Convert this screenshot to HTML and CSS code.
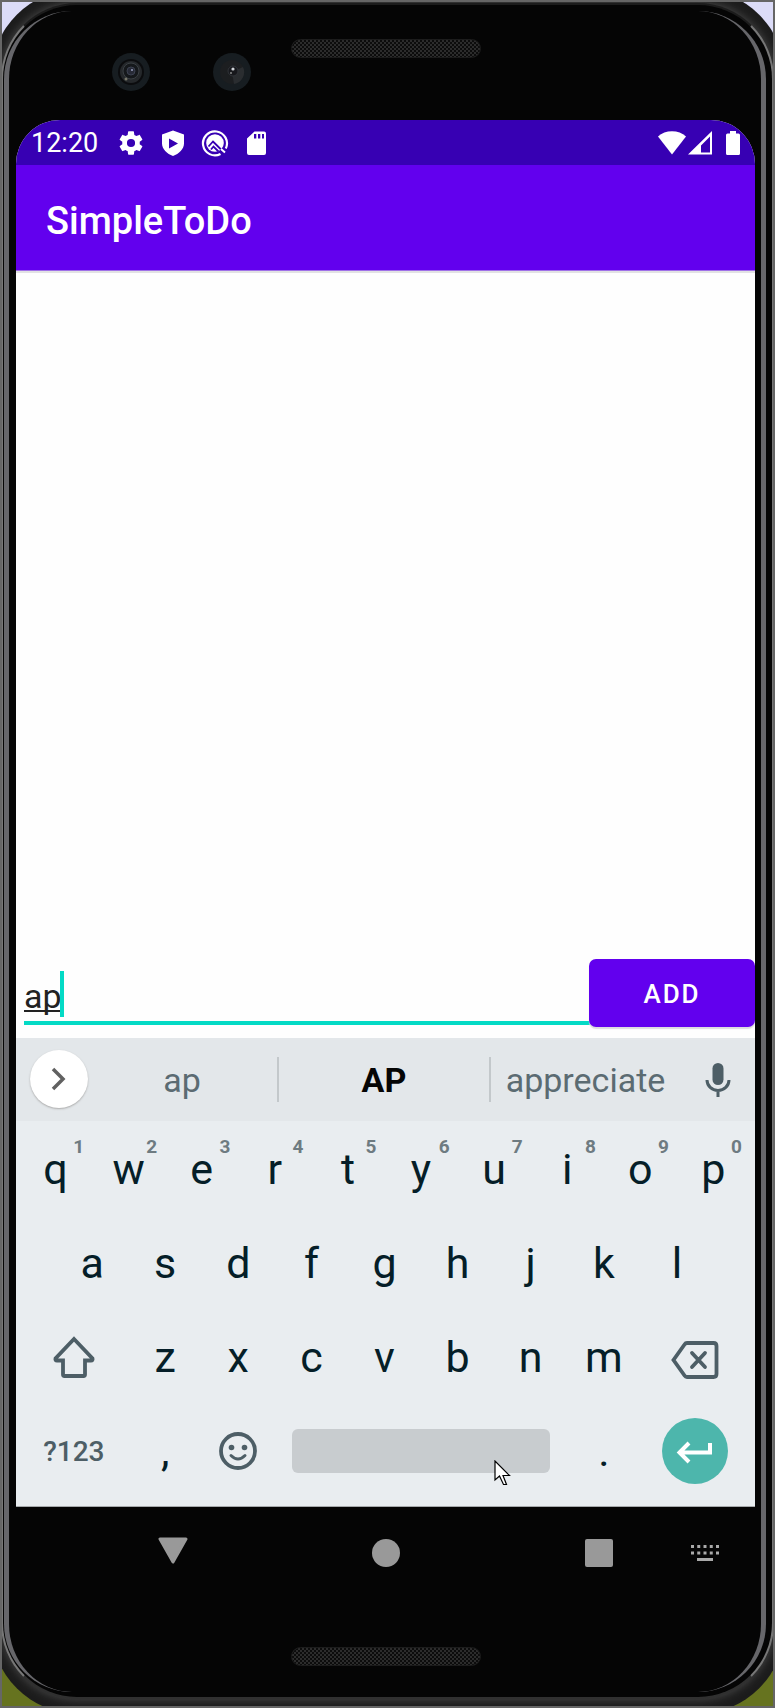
FILE: index.html
```html
<!DOCTYPE html>
<html lang="en">
<head>
<meta charset="utf-8">
<meta name="viewport" content="width=device-width, initial-scale=1">
<title>SimpleToDo</title>
<link rel="stylesheet" href="styles.css">
</head>
<body>
<div class="window">
  <div class="phone">
    <span class="shell"></span>
    <span class="rim"></span>
    <span class="bevel"></span>

    <div class="bezel bezel-top">
      <div class="cameras">
        <svg class="camera" viewBox="0 0 38 38" aria-hidden="true"><circle cx="19" cy="19" r="19" fill="#171d21"/><circle cx="19" cy="19" r="13" fill="#0b0c0e"/><circle cx="19" cy="19" r="11" fill="#25282b"/><circle cx="19" cy="18" r="8" fill="#15181b" stroke="#3b4044"/><circle cx="19" cy="18" r="4" fill="#272a36" stroke="#3c4150"/><circle cx="20" cy="17" r="1" fill="#9aa0c0"/><circle cx="14" cy="26" r="1.5" fill="#77776a"/></svg>
        <svg class="camera" viewBox="0 0 38 38" aria-hidden="true"><circle cx="19" cy="19" r="19" fill="#171d21"/><circle cx="19" cy="19" r="12" fill="#1c1e20"/><path d="M19 19 30 14a12 12 0 0 1-9 17z" fill="#2a2d30"/><circle cx="20" cy="18" r="5" fill="#17181c" stroke="#303338"/><circle cx="20" cy="16" r="1.6" fill="#d0d4d8"/><circle cx="18" cy="20" r="1" fill="#888"/></svg>
      </div>
      <div class="speaker"></div>
    </div>

    <div class="screen">
      <div class="status">
        <span class="clock">12:20</span>
        <div class="status-icons">
          <svg class="icon28" viewBox="0 0 24 24" aria-hidden="true"><path fill="#fff" d="M19.43 12.98c.04-.32.07-.64.07-.98s-.03-.66-.07-.98l2.11-1.65c.19-.15.24-.42.12-.64l-2-3.46c-.12-.22-.39-.3-.61-.22l-2.49 1c-.52-.4-1.08-.73-1.69-.98l-.38-2.65C14.46 2.18 14.25 2 14 2h-4c-.25 0-.46.18-.49.42l-.38 2.65c-.61.25-1.17.59-1.69.98l-2.49-1c-.23-.09-.49 0-.61.22l-2 3.46c-.13.22-.07.49.12.64l2.11 1.65c-.04.32-.07.65-.07.98s.03.66.07.98l-2.11 1.65c-.19.15-.24.42-.12.64l2 3.46c.12.22.39.3.61.22l2.49-1c.52.4 1.08.73 1.69.98l.38 2.65c.03.24.24.42.49.42h4c.25 0 .46-.18.49-.42l.38-2.65c.61-.25 1.17-.59 1.69-.98l2.49 1c.23.09.49 0 .61-.22l2-3.46c.12-.22.07-.49-.12-.64l-2.11-1.65zM12 15.5a3.5 3.5 0 1 1 0-7 3.5 3.5 0 0 1 0 7z"/></svg>
          <svg class="icon28" viewBox="0 0 28 28" aria-hidden="true"><path fill="#fff" fill-rule="evenodd" d="M14 1.500 25 5.500v9c0 5.500-5 10.500-11 12.500C8 25 3 20 3 14.500v-9zM10 9.500v10l9-5z"/></svg>
          <svg class="icon28" viewBox="0 0 28 28" aria-hidden="true"><path fill="none" stroke="#fff" stroke-width="2.200" d="M19.500 25A12 12 0 1 1 24.800 19.500"/><circle cx="14" cy="14" r="8.800" fill="#fff"/><path fill="none" stroke="#3700b3" stroke-width="1.800" d="M7.500 17.500 12 12.500 14 14.500 21.500 22M10 20.500 12.500 17.500 17.500 22.500"/><path fill="none" stroke="#fff" stroke-width="2" d="m20 20 4 3.500"/></svg>
          <svg class="icon28" viewBox="0 0 28 28" aria-hidden="true"><path fill="#fff" fill-rule="evenodd" d="M11.500 2.500H21a2 2 0 0 1 2 2v19.500a2 2 0 0 1-2 2H6a2 2 0 0 1-2-2V9.500zM11 5v4.500h2.300V5zm4 0v4.500h2.300V5zm4 0v4.500h2V5z"/></svg>
        </div>
        <div class="system-icons">
          <svg class="icon28" viewBox="0 0 28 28" aria-hidden="true"><path fill="#fff" d="M0 7.500C7 .500 21 .500 28 7.500L14 25.500z"/></svg>
          <svg class="icon28" viewBox="0 0 28 28" aria-hidden="true"><path fill="#fff" fill-rule="evenodd" d="M26 2v23.500H2zM24 7.500 15 16.500v7h9z"/></svg>
          <svg class="icon28 battery" viewBox="0 0 28 28" aria-hidden="true"><path fill="#fff" d="M11 2h6v2.500h2.500a1.500 1.500 0 0 1 1.500 1.500v18.500a1.500 1.500 0 0 1-1.500 1.500h-11A1.500 1.500 0 0 1 7 24.500V6a1.500 1.500 0 0 1 1.500-1.500H11z"/></svg>
        </div>
      </div>

      <header class="appbar"><h1 class="title">SimpleToDo</h1></header>
      <main class="list"></main>

      <form class="entry">
        <div class="field">
          <input class="entry-input" type="text" value="ap" aria-label="New item">
          <span class="caret"></span>
        </div>
        <button class="add" type="button">ADD</button>
      </form>

      <div class="suggestions">
        <button class="expand" type="button" aria-label="Expand toolbar"><svg width="28" height="28" viewBox="0 0 28 28" aria-hidden="true"><path d="m8 4 10 10L8 24" fill="none" stroke="#616161" stroke-width="3.500"/></svg></button>
        <button class="suggestion" type="button">ap</button>
        <button class="suggestion best" type="button">AP</button>
        <button class="suggestion" type="button">appreciate</button>
        <button class="mic" type="button" aria-label="Voice input"><svg width="26" height="34" viewBox="0 0 26 34" aria-hidden="true"><rect x="7.500" y="0" width="11" height="22" rx="5.500" fill="#4d5e66"/><path d="M2 17a11 10.500 0 0 0 22 0M13 27v7" fill="none" stroke="#4d5e66" stroke-width="3"/></svg></button>
      </div>

      <div class="keyboard">
        <div class="keys">
          <button class="key" type="button">q<span class="hint">1</span></button>
          <button class="key" type="button">w<span class="hint">2</span></button>
          <button class="key" type="button">e<span class="hint">3</span></button>
          <button class="key" type="button">r<span class="hint">4</span></button>
          <button class="key" type="button">t<span class="hint">5</span></button>
          <button class="key" type="button">y<span class="hint">6</span></button>
          <button class="key" type="button">u<span class="hint">7</span></button>
          <button class="key" type="button">i<span class="hint">8</span></button>
          <button class="key" type="button">o<span class="hint">9</span></button>
          <button class="key" type="button">p<span class="hint">0</span></button>
        </div>
        <div class="keys">
          <button class="key key-inset" type="button">a</button>
          <button class="key" type="button">s</button>
          <button class="key" type="button">d</button>
          <button class="key" type="button">f</button>
          <button class="key" type="button">g</button>
          <button class="key" type="button">h</button>
          <button class="key" type="button">j</button>
          <button class="key" type="button">k</button>
          <button class="key" type="button">l</button>
        </div>
        <div class="keys">
          <button class="key key-wide" type="button" aria-label="Shift"><svg width="44" height="44" viewBox="0 0 44 44" aria-hidden="true"><path d="M22 4 40.500 23.500q.500 2-1.500 2h-6v14q0 1.500-1.500 1.500h-19q-1.500 0-1.500-1.500v-14H5q-2 0-1.500-2z" fill="none" stroke="#4d5e66" stroke-width="3.800"/></svg></button>
          <button class="key" type="button">z</button>
          <button class="key" type="button">x</button>
          <button class="key" type="button">c</button>
          <button class="key" type="button">v</button>
          <button class="key" type="button">b</button>
          <button class="key" type="button">n</button>
          <button class="key" type="button">m</button>
          <button class="key key-wide" type="button" aria-label="Backspace"><svg width="48" height="44" viewBox="0 0 48 44" aria-hidden="true"><g fill="none" stroke="#4d5e66" stroke-width="3.800"><path d="M16 8h26.500q3 0 3 3v28q0 3-3 3H16q-1.500 0-2.500-1.500L2.500 25 13.500 9.500Q14.500 8 16 8z"/><path stroke-linecap="round" d="m21 18 13 14M34 18 21 32"/></g></svg></button>
        </div>
        <div class="keys">
          <button class="key key-wide key-symbols" type="button">?123</button>
          <button class="key" type="button">,</button>
          <button class="key" type="button" aria-label="Emoji"><svg width="38" height="38" viewBox="0 0 38 38" aria-hidden="true"><circle cx="19" cy="19" r="17" fill="none" stroke="#4d5e66" stroke-width="3.800"/><circle cx="12.500" cy="15.500" r="2.800" fill="#4d5e66"/><circle cx="25.500" cy="15.500" r="2.800" fill="#4d5e66"/><path d="M12 23.500q7 7 14 0" fill="none" stroke="#4d5e66" stroke-width="3" stroke-linecap="round"/></svg></button>
          <button class="space" type="button" aria-label="Space"><svg class="pointer" width="17" height="26" viewBox="0 0 17 26" aria-hidden="true"><path d="M1 1v19l4.500-4 4 8.500h3L9 15.500h6.500z" fill="#fff" stroke="#000" stroke-width="1.200"/></svg></button>
          <button class="key" type="button">.</button>
          <button class="key key-wide" type="button" aria-label="Enter"><svg width="66" height="66" viewBox="0 0 66 66" aria-hidden="true"><circle cx="33" cy="33" r="33" fill="#4db6ac"/><path d="M48 25v9.500H17M27 25 17.500 34.500 27 44" fill="none" stroke="#fff" stroke-width="4"/></svg></button>
        </div>
      </div>

      <nav class="nav">
        <button class="nav-button nav-back" type="button" aria-label="Back"><svg width="30" height="32" viewBox="0 0 30 32" aria-hidden="true"><path d="M2 2h26L15 25z" fill="#999" stroke="#999" stroke-width="3" stroke-linejoin="round"/></svg></button>
        <button class="nav-button" type="button" aria-label="Home"><svg width="28" height="28" viewBox="0 0 28 28" aria-hidden="true"><circle cx="14" cy="14" r="14" fill="#999"/></svg></button>
        <button class="nav-button" type="button" aria-label="Recent apps"><svg width="28" height="28" viewBox="0 0 28 28" aria-hidden="true"><rect width="28" height="28" rx="2" fill="#999"/></svg></button>
        <button class="nav-button nav-keyboard" type="button" aria-label="Switch keyboard"><svg width="28" height="16" viewBox="0 0 28 16" aria-hidden="true"><path d="M0 1.500h28M0 8h28" stroke="#aaa" stroke-width="3" stroke-dasharray="3 3.250"/><path d="M6 14.500h16" stroke="#aaa" stroke-width="3"/></svg></button>
      </nav>
    </div>

    <div class="bezel bezel-bottom"><div class="speaker"></div></div>
  </div>
</div>
</body>
</html>
```
FILE: styles.css
```css
* {
  box-sizing: border-box;
}

body {
  margin: 0;
  font-family: Roboto, "Liberation Sans", sans-serif;
}

button,
input {
  margin: 0;
  padding: 0;
  border: 0;
  background: none;
  font: inherit;
  color: inherit;
}

svg {
  display: block;
}

.window {
  display: flex;
  min-height: 100vh;
  border: 2px solid #666;
  background: linear-gradient(#dcdcf8 50%, #66731f 50%);
  overflow: hidden;
}

/* Phone body */
.phone {
  position: relative;
  isolation: isolate;
  flex: 1;
  display: flex;
  flex-direction: column;
  padding: 0 18px 0 14px;
}

.shell,
.rim,
.bevel {
  position: absolute;
  z-index: -1;
}

.shell {
  inset: -13px -12px -8px -11px;
  border-radius: 88px;
  background: #1c1c1c;
}

.rim {
  inset: 1px -1px 7px -1px;
  border: 2px solid #777;
  border-top-color: #1c1c1c;
  border-bottom-color: #303030;
  border-radius: 76px;
  background: #050505;
  box-shadow: 0 0 8px 1px #444;
}

.bevel {
  inset: 9px 7px 14px 2px;
  border: solid #66666a;
  border-width: 0 5px;
  border-radius: 68px;
}

.bezel {
  display: grid;
  grid-template-columns: 1fr 190px 1fr;
  align-items: start;
}

.bezel-top {
  height: 118px;
  padding-top: 37px;
}

.bezel-bottom {
  height: 106px;
  padding-top: 47px;
}

.speaker {
  grid-column: 2;
  height: 19px;
  border: 1px solid #1c1c1c;
  border-radius: 10px;
  background: repeating-conic-gradient(#2c2c2c 0 25%, #0c0c0c 0 50%) 0 0 / 4px 4px;
}

.cameras {
  display: flex;
  gap: 63px;
  margin: 14px 0 0 96px;
}

.camera {
  width: 38px;
  height: 38px;
}

/* Screen */
.screen {
  flex: 1;
  display: flex;
  flex-direction: column;
  border-radius: 44px 44px 0 0;
  background: #fefefe;
  overflow: hidden;
}

.status {
  display: flex;
  align-items: center;
  height: 45px;
  padding: 0 8px 0 15px;
  background: #3700b3;
  color: #fff;
}

.clock {
  font-size: 27px;
}

.status-icons {
  display: flex;
  gap: 14px;
  margin-left: 19px;
}

.system-icons {
  display: flex;
  margin-left: auto;
}

.icon28 {
  width: 28px;
  height: 28px;
}

.battery {
  margin-left: 5px;
}

.appbar {
  display: flex;
  align-items: center;
  height: 106px;
  padding: 6px 30px 0;
  border-bottom: 1px solid #a070e8;
  background: #6200ee;
  color: #fff;
  box-shadow: 0 2px 0 #e2e2e4;
}

.title {
  margin: 0;
  font-size: 38px;
  font-weight: 500;
}

.list {
  flex: 1;
}

.entry {
  display: flex;
  align-items: flex-end;
  padding: 0 0 11px 8px;
}

.field {
  position: relative;
  flex: 1;
  margin: 0 -4px 2px 0;
  border-bottom: 4px solid #03dac5;
}

.entry-input {
  display: block;
  width: 100%;
  height: 50px;
  color: #222;
  font-size: 34px;
  text-decoration: underline 2px;
  text-decoration-skip-ink: none;
  text-underline-offset: 2px;
  outline: 0;
}

.caret {
  position: absolute;
  top: 0;
  left: 36px;
  width: 4px;
  height: 46px;
  background: #03dac5;
}

.add {
  position: relative;
  width: 166px;
  height: 68px;
  padding-top: 2px;
  border-radius: 7px;
  background: #6200ee;
  color: #fff;
  font-size: 26px;
  font-weight: 500;
  letter-spacing: 2px;
  box-shadow: 0 2px 1px #dcdcdf;
}

/* Suggestion strip */
.suggestions {
  display: grid;
  grid-template-columns: 71px 190fr 214fr 189fr 75px;
  align-items: center;
  height: 83px;
  background: #e3e7ea;
}

.expand {
  display: grid;
  place-items: center;
  width: 58px;
  height: 58px;
  margin: 0 0 2px 14px;
  border-radius: 50%;
  background: #fff;
  box-shadow: 0 1px 2px #aaa;
}

.suggestion {
  height: 45px;
  padding-top: 1px;
  color: #5b6b72;
  font-size: 34px;
  line-height: 45px;
}

.best {
  border: solid #c3c8cb;
  border-width: 0 2px;
  color: #050505;
  font-weight: 700;
}

.mic {
  justify-self: center;
}

/* Keyboard */
.keyboard {
  padding: 1px 5px 8px 3px;
  border-bottom: 1px solid #a6a9ab;
  background: #e9edf0;
}

.keys {
  display: grid;
  grid-template-columns: repeat(20, 1fr);
  height: 94px;
}

.key {
  position: relative;
  display: flex;
  align-items: center;
  justify-content: center;
  grid-column: span 2;
  color: #051e28;
  font-size: 43px;
}

.key-inset {
  grid-column: 2 / span 2;
}

.key-wide {
  grid-column: span 3;
}

.key-symbols {
  color: #4d5e66;
  font-size: 28px;
  font-weight: 500;
}

.hint {
  position: absolute;
  top: 14px;
  right: 8px;
  color: #6e7b81;
  font-size: 19px;
  font-weight: 700;
  line-height: 22px;
}

.space {
  position: relative;
  grid-column: span 8;
  align-self: center;
  height: 44px;
  margin: 0 17px;
  border-radius: 6px;
  background: #c8cccf;
}

.pointer {
  position: absolute;
  top: 31px;
  right: 39px;
}

/* Navigation bar */
.nav {
  display: grid;
  grid-template-columns: 50px 1fr 1fr 1fr 50px;
  align-items: center;
  height: 93px;
  padding-bottom: 2px;
  background: #050505;
}

.nav-button {
  justify-self: center;
}

.nav-back {
  grid-column: 2;
}

.nav-keyboard {
  justify-self: start;
  margin-left: -14px;
}
```
